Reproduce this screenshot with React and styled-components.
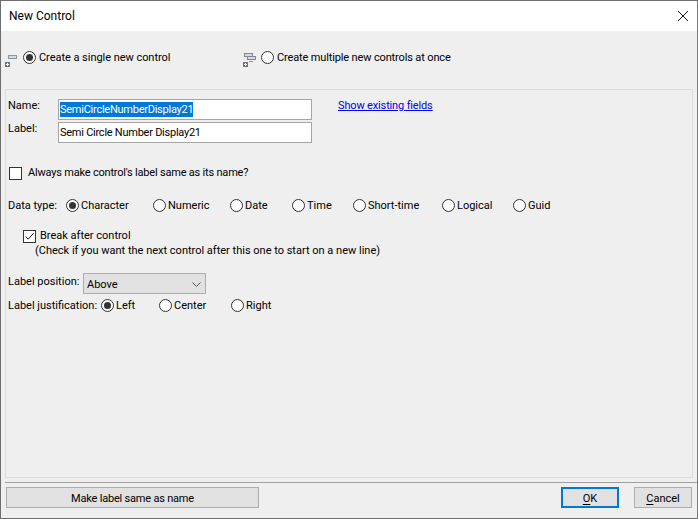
import React from 'react';
import styled, { createGlobalStyle } from 'styled-components';

const GlobalStyle = createGlobalStyle`
  html, body {
    margin: 0;
    padding: 0;
    background: #efefef;
  }
  * {
    box-sizing: border-box;
  }
`;

const Dialog = styled.div`
  width: 698px;
  height: 519px;
  display: flex;
  flex-direction: column;
  border: 1px solid #6e6e6e;
  border-right-color: #7a7a7a;
  background: #efefef;
  color: #000;
  font-family: Roboto, 'Noto Sans', sans-serif;
  font-size: 11px;
  line-height: 16px;
  white-space: nowrap;
`;

const TitleBar = styled.div`
  height: 30px;
  flex: none;
  display: flex;
  align-items: center;
  justify-content: space-between;
  padding: 0 9px 0 8px;
  background: #fff;
  font-size: 12px;
`;

const ModeRow = styled.div`
  height: 58px;
  flex: none;
  display: flex;
  align-items: center;
  padding: 0 0 5px 4px;
`;

const ModeOption = styled.div`
  width: ${(p) => p.$width}px;
  display: flex;
  align-items: center;
  gap: 3px;
  letter-spacing: ${(p) => p.$spacing}px;
`;

const ModeIcon = styled.span`
  width: 15px;
  height: 14px;
  flex: none;
  display: flex;
  margin-top: 5px;
`;

const Panel = styled.div`
  flex: 1;
  margin: 0 4px;
  padding: 9px 2px 0;
  border: 1px solid #dcdcdc;
  display: flex;
  flex-direction: column;
`;

const NameGrid = styled.div`
  display: grid;
  grid-template-columns: 50px 254px auto;
  grid-auto-rows: 21px;
  row-gap: 2px;
`;

const FieldLabel = styled.div`
  line-height: 14px;
`;

const TextField = styled.div`
  border: 1px solid #a5a5a5;
  background: #fff;
  padding: 2px 1px;
  line-height: 15px;
  letter-spacing: -0.25px;
`;

const Selected = styled.span`
  display: inline-block;
  background: #0078d7;
  color: #fff;
`;

const FieldLink = styled.a`
  margin-left: 26px;
  line-height: 14px;
  letter-spacing: -0.15px;
  color: #0000ee;
  text-decoration: underline;
`;

const CheckRow = styled.label`
  display: flex;
  align-items: center;
  gap: ${(p) => p.$gap}px;
  height: 16px;
  margin: ${(p) => p.$margin};
  letter-spacing: ${(p) => p.$spacing || 0}px;
`;

const Hint = styled.div`
  margin: -1px 0 0 27px;
  height: 15px;
`;

const OptionRow = styled.div`
  display: flex;
  align-items: center;
  height: 17px;
  padding-top: 1px;
  margin-top: ${(p) => p.$top}px;
`;

const RowLabel = styled.div`
  width: ${(p) => p.$width}px;
  flex: none;
`;

const Option = styled.div`
  width: ${(p) => p.$width}px;
  flex: none;
  display: flex;
  align-items: center;
  gap: 2px;
  & > span {
    margin-top: -1px;
  }
`;

const RadioMark = styled.span`
  width: 13px;
  height: 13px;
  flex: none;
  border-radius: 50%;
  border: 1px solid #333;
  background: #fff;
  display: flex;
  align-items: center;
  justify-content: center;
  &::after {
    content: '';
    display: ${(p) => (p.$on ? 'block' : 'none')};
    width: 7px;
    height: 7px;
    border-radius: 50%;
    background: #333;
  }
`;

const CheckMark = styled.span`
  width: 13px;
  height: 13px;
  flex: none;
  border: 1px solid #333;
  background: #fff;
  display: flex;
`;

const PositionRow = styled.div`
  display: flex;
  align-items: flex-start;
  height: 21px;
  margin-top: 15px;
`;

const PositionLabel = styled(RowLabel)`
  padding-top: 1px;
`;

const Dropdown = styled.div`
  width: 123px;
  height: 21px;
  display: flex;
  align-items: center;
  justify-content: space-between;
  margin-left: 3px;
  padding: 2px 4px 0 3px;
  border: 1px solid #adadad;
  background: #e1e1e1;
`;

const Footer = styled.div`
  flex: none;
  height: 36px;
  margin: 4px 0 0 4px;
  padding: 4px 5px 0 1px;
  border-top: 1px solid #a0a0a0;
  display: flex;
  align-items: flex-start;
`;

const Button = styled.button`
  width: ${(p) => p.$width}px;
  height: 21px;
  margin-left: ${(p) => p.$left || 0}px;
  padding: 2px 0 0;
  border: ${(p) => (p.$primary ? '2px solid #0078d7' : '1px solid #adadad')};
  background: #e1e1e1;
  color: #000;
  font: inherit;
  letter-spacing: ${(p) => p.$spacing || 0}px;
  text-align: center;
  u {
    text-underline-offset: 2px;
  }
`;

const CloseIcon = () => (
  <svg width="10" height="10" viewBox="0 0 10 10">
    <path d="M0 0L10 10M10 0L0 10" stroke="#111" strokeWidth="1" fill="none" />
  </svg>
);

const SingleIcon = () => (
  <svg width="12" height="14" viewBox="0 0 12 14">
    <rect x="3.5" y="2.5" width="8" height="3" fill="#d5dae0" stroke="#8d959e" />
    <rect x="0" y="9" width="5" height="5" fill="#6d747c" />
    <path d="M1 11.5H4M2.5 10V13" stroke="#fff" />
  </svg>
);

const MultiIcon = () => (
  <svg width="14" height="14" viewBox="0 0 14 14">
    <rect x="1.5" y="0.5" width="8" height="3" fill="#d5dae0" stroke="#7f8790" />
    <rect x="4.5" y="3.5" width="8" height="3" fill="#d5dae0" stroke="#7f8790" />
    <path d="M6 8.5H10" stroke="#8d959e" />
    <rect x="0" y="9" width="5" height="5" fill="#6d747c" />
    <path d="M1 11.5H4M2.5 10V13" stroke="#fff" />
  </svg>
);

const Tick = () => (
  <svg width="11" height="11" viewBox="0 0 11 11">
    <path d="M1.5 5.5L4.2 8.2L9.5 2.2" stroke="#222" strokeWidth="1" fill="none" />
  </svg>
);

const Chevron = () => (
  <svg width="9" height="5" viewBox="0 0 9 5">
    <path d="M0.5 0.5L4.5 4.5L8.5 0.5" stroke="#555" strokeWidth="1" fill="none" />
  </svg>
);

const dataTypes = [
  { name: 'Character', width: 87, on: true },
  { name: 'Numeric', width: 77 },
  { name: 'Date', width: 62 },
  { name: 'Time', width: 61 },
  { name: 'Short-time', width: 89 },
  { name: 'Logical', width: 71 },
  { name: 'Guid', width: 60 },
];

const justifications = [
  { name: 'Left', width: 58, on: true },
  { name: 'Center', width: 72 },
  { name: 'Right', width: 60 },
];

const renderOptions = (options) =>
  options.map((option) => (
    <Option key={option.name} $width={option.width}>
      <RadioMark $on={option.on} />
      {option.name}
    </Option>
  ));

const App = () => (
  <>
    <GlobalStyle />
    <Dialog>
      <TitleBar>
        New Control
        <CloseIcon />
      </TitleBar>
      <ModeRow>
        <ModeOption $width={238} $spacing={-0.04}>
          <ModeIcon>
            <SingleIcon />
          </ModeIcon>
          <RadioMark $on />
          Create a single new control
        </ModeOption>
        <ModeOption $width={240} $spacing={-0.14}>
          <ModeIcon>
            <MultiIcon />
          </ModeIcon>
          <RadioMark />
          Create multiple new controls at once
        </ModeOption>
      </ModeRow>
      <Panel>
        <NameGrid>
          <FieldLabel>Name:</FieldLabel>
          <TextField>
            <Selected>SemiCircleNumberDisplay21</Selected>
          </TextField>
          <FieldLink href="#fields">Show existing fields</FieldLink>
          <FieldLabel>Label:</FieldLabel>
          <TextField>Semi Circle Number Display21</TextField>
        </NameGrid>
        <CheckRow $gap={6} $margin="22px 0 0 1px" $spacing={-0.2}>
          <CheckMark />
          Always make control's label same as its name?
        </CheckRow>
        <OptionRow $top={16}>
          <RowLabel $width={58}>Data type:</RowLabel>
          {renderOptions(dataTypes)}
        </OptionRow>
        <CheckRow $gap={4} $margin="14px 0 0 15px">
          <CheckMark>
            <Tick />
          </CheckMark>
          Break after control
        </CheckRow>
        <Hint>(Check if you want the next control after this one to start on a new line)</Hint>
        <PositionRow>
          <PositionLabel $width={72}>Label position:</PositionLabel>
          <Dropdown>
            Above
            <Chevron />
          </Dropdown>
        </PositionRow>
        <OptionRow $top={3}>
          <RowLabel $width={93}>Label justification:</RowLabel>
          {renderOptions(justifications)}
        </OptionRow>
      </Panel>
      <Footer>
        <Button $width={253} $spacing={-0.2}>Make label same as name</Button>
        <Button $width={58} $left={302} $primary>
          <u>O</u>K
        </Button>
        <Button $width={58} $left={15}>
          <u>C</u>ancel
        </Button>
      </Footer>
    </Dialog>
  </>
);

export default App;
